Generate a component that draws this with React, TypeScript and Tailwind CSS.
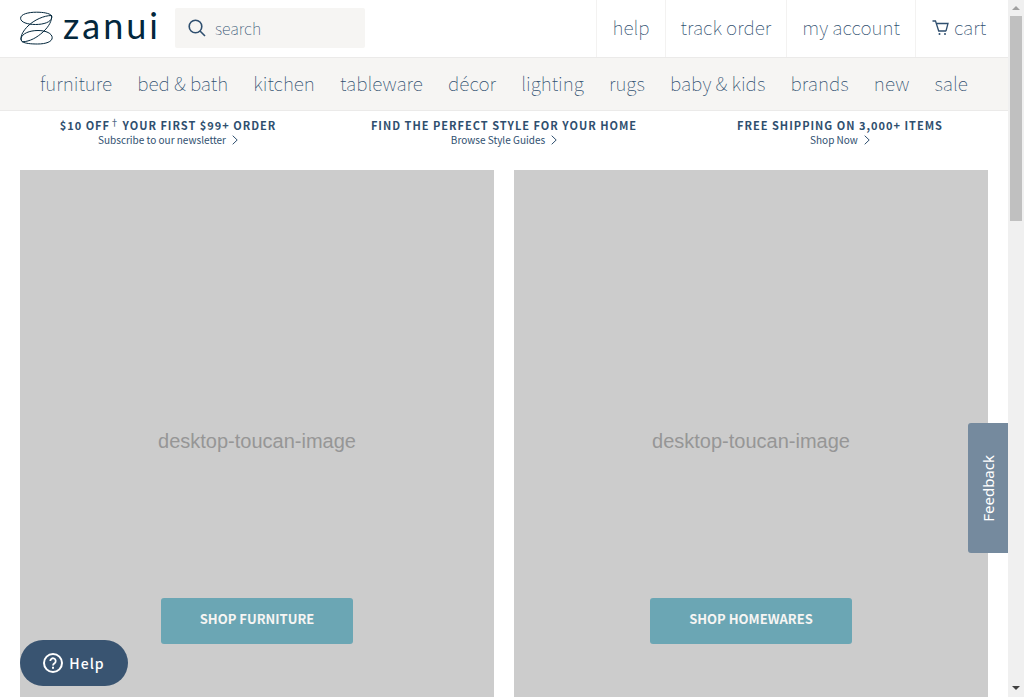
const navItems = [
  'furniture', 'bed & bath', 'kitchen', 'tableware', 'décor', 'lighting',
  'rugs', 'baby & kids', 'brands', 'new', 'sale',
];

const promos = [
  { title: ['$10 OFF', '†', ' YOUR FIRST $99+ ORDER'], link: 'Subscribe to our newsletter' },
  { title: ['FIND THE PERFECT STYLE FOR YOUR HOME'], link: 'Browse Style Guides' },
  { title: ['FREE SHIPPING ON 3,000+ ITEMS'], link: 'Shop Now' },
];

const tiles = ['SHOP FURNITURE', 'SHOP HOMEWARES'];

function Logo() {
  return (
    <a href="#" aria-label="zanui home" className="flex h-14 w-[155px] shrink-0 items-center text-[#03273c]">
      <svg viewBox="0 0 34 34" className="h-[34px] w-[34px] shrink-0" fill="none" stroke="currentColor" strokeWidth="1">
        <path d="M31.500 4.500C29.200 2.200 23.500 1.200 16.500 1.200 8 1.200.6 3.200.6 7.300c0 4 6.900 6.200 14.900 6.200 8.500 0 15.200-2.500 16.200-6.500.2-.9.200-1.700-.2-2.500Z" />
        <path d="M31.500 4.500C24 4.500 14 9 8 15 3.500 19.500.8 24 1 28c.2 1.500.8 2.300 1.500 2.800C10 30.500 17 26.500 23 21c6-5.500 9.200-11.500 8.500-16.500Z" />
        <path d="M2.500 30.800C5.500 32.500 11 33 17.500 33c8.500 0 14.700-2.300 14.700-6.300 0-4.200-6.200-7.200-14.200-7.200-8.500 0-16 3-17 8 0 1.300.5 2.400 1.500 3.300Z" />
      </svg>
      <span className="mb-[6px] ml-[9px] font-[Lato,sans-serif] text-[36px] leading-[48px] tracking-[3px]">zanui</span>
    </a>
  );
}

function CartIcon() {
  return (
    <svg viewBox="0 0 17 16" className="mr-[5px] h-4 w-[17px]" fill="none" stroke="currentColor" strokeWidth="1.3">
      <path d="M0.500 1h3l3.200 10h7.300M4.400 3.500h11.600l-2 7.500" />
      <circle cx="7.500" cy="14" r="1" fill="currentColor" stroke="none" />
      <circle cx="13" cy="14" r="1" fill="currentColor" stroke="none" />
    </svg>
  );
}

function HeaderLinks() {
  const link = 'flex items-center border-l border-[#f3f2f1] px-[15px] pb-[2px]';
  return (
    <nav aria-label="Account" className="ml-auto flex text-[19px] font-thin">
      <a href="#" className={link}>help</a>
      <a href="#" className={link}>track order</a>
      <a href="#" className={link}>my account</a>
      <a href="#" className="flex items-center border-l border-[#f3f2f1] pr-[22px] pb-[2px] pl-4">
        <CartIcon />cart
      </a>
    </nav>
  );
}

function Scrollbar() {
  return (
    <div aria-hidden="true" className="flex w-4 shrink-0 flex-col items-center bg-[#f0f0f0]">
      <div className="flex h-4 items-center">
        <svg viewBox="0 0 8 4" className="h-1 w-2" fill="#a0a0a0"><path d="M0 4 4 0l4 4Z" /></svg>
      </div>
      <div className="h-[205px] w-3 bg-[#c0c0c0]" />
      <div className="mt-auto flex h-[18px] items-center">
        <svg viewBox="0 0 8 4" className="h-1 w-2" fill="#404040"><path d="M0 0 4 4l4-4Z" /></svg>
      </div>
    </div>
  );
}

export default function App() {
  return (
    <div className="flex h-screen overflow-hidden bg-white font-['Noto_Sans_CJK_SC','Noto_Sans',sans-serif] text-[#2f4f6f]">
      <div className="relative min-w-0 flex-1 overflow-hidden">
        <header>
          <div className="flex h-[57px] pl-5">
            <Logo />
            <label className="mt-2 flex h-10 w-[190px] items-center rounded-[2px] bg-[#f6f5f3] pl-[13px]">
              <svg viewBox="0 0 18 18" className="h-[18px] w-[18px] shrink-0" fill="none" stroke="currentColor" strokeWidth="1.6">
                <circle cx="7.500" cy="7.500" r="6.300" />
                <path d="m12 12 5 5" />
              </svg>
              <input
                type="search"
                aria-label="Search"
                placeholder="search"
                className="ml-[9px] h-8 min-w-0 flex-1 bg-transparent text-base font-thin outline-none placeholder:text-[#2f4f6f]"
              />
            </label>
            <HeaderLinks />
          </div>
          <nav aria-label="Departments" className="flex h-[54px] items-center justify-between border-y border-[#ebeae9] bg-[#f6f5f3] px-10 pb-[2px] text-[19px] font-thin whitespace-nowrap">
            {navItems.map((item) => <a key={item} href="#">{item}</a>)}
          </nav>
        </header>

        <section className="grid grid-cols-3 pt-[7px] text-center">
          {promos.map(({ title, link }) => (
            <a key={link} href="#" className="block">
              <h2 className="text-[11px] leading-[15px] font-bold tracking-[1px]">
                {title.map((part) => part === '†'
                  ? <sup key={part} className="-top-1 text-[9px] font-normal tracking-normal">{part}</sup>
                  : part)}
              </h2>
              <p className="flex items-center justify-center gap-[6px] text-[10px] leading-[14px]">
                {link}
                <svg viewBox="0 0 6 10" className="h-[10px] w-[6px]" fill="none" stroke="currentColor"><path d="m.7.7 4.500 4.300L.7 9.300" /></svg>
              </p>
            </a>
          ))}
        </section>

        <main className="grid grid-cols-2 gap-5 px-5 pt-[23px]">
          {tiles.map((label) => (
            <article key={label} className="relative flex aspect-[474/542] items-center justify-center bg-[#ccc]">
              <span className="font-['Liberation_Sans',sans-serif] text-[20px] text-[#969696]">desktop-toucan-image</span>
              <div className="absolute inset-x-0 bottom-[68px] flex justify-center">
                <button type="button" className="h-[46px] rounded-[3px] bg-[#6ba6b4] px-[39px] pb-1 text-[13px] font-bold text-[#f6f5f3]">{label}</button>
              </div>
            </article>
          ))}
        </main>

        <button type="button" className="absolute right-0 bottom-36 flex h-[130px] w-10 items-center justify-center rounded-l-[3px] bg-[#758a9e] font-['Noto_Sans',sans-serif] text-[15px] text-white">
          <span className="rotate-180 [writing-mode:vertical-rl]">Feedback</span>
        </button>
        <button type="button" className="absolute bottom-[11px] left-5 flex h-[46px] w-[108px] items-center justify-center gap-[6px] rounded-full bg-[#395471] text-sm font-medium tracking-[1px] text-white">
          <svg viewBox="0 0 20 20" className="h-5 w-5" fill="none" stroke="currentColor" strokeWidth="2">
            <circle cx="10" cy="10" r="9" />
            <path d="M7.300 8a2.700 2.700 0 1 1 4.500 2c-1.100.8-1.800 1.300-1.800 2.500" strokeWidth="1.800" />
            <path d="M10 13.800v1.900" />
          </svg>
          Help
        </button>
      </div>
      <Scrollbar />
    </div>
  );
}
